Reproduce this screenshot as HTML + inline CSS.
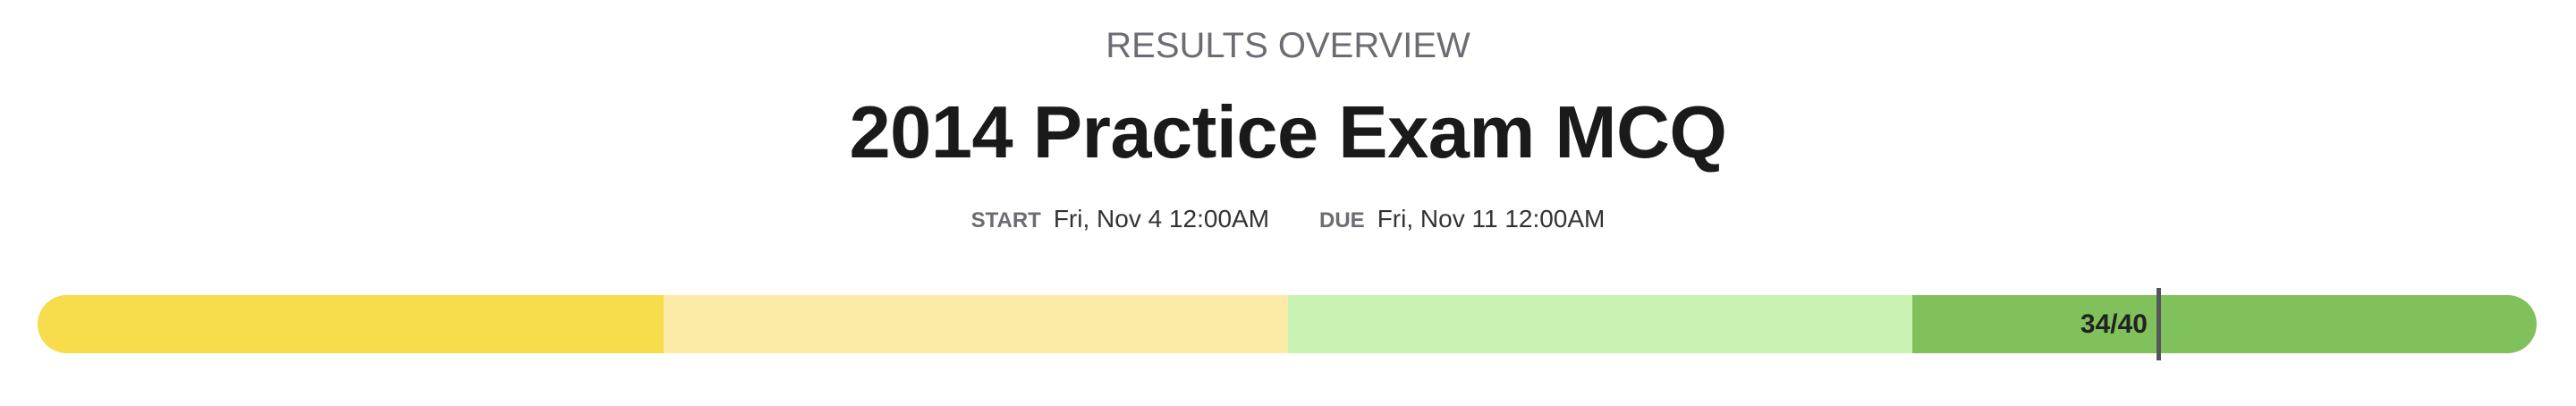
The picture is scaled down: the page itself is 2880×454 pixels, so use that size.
<!DOCTYPE html>
<html><head><meta charset="utf-8"><style>
html,body{margin:0;padding:0;width:2880px;height:454px;background:#fff;overflow:hidden;font-family:"Liberation Sans",Arial,sans-serif;position:relative}
.c{position:absolute;left:0;width:2880px;text-align:center;white-space:nowrap}
#sub{top:27px;font-size:40px;line-height:48px;color:#6c6c74}
#title{top:98px;font-size:83px;line-height:100px;font-weight:bold;color:#1a1a1a;letter-spacing:-0.5px}
#dates{top:228px;font-size:28px;line-height:34px;color:#333}
#dates b{font-size:24px;color:#6c6c74;margin-right:14px}
.seg{position:absolute;top:330px;height:65px}
</style></head><body>
<div class="c" id="sub">RESULTS OVERVIEW</div>
<div class="c" id="title">2014 Practice Exam MCQ</div>
<div class="c" id="dates"><b>START</b>Fri, Nov 4 12:00AM<span style="display:inline-block;width:56px"></span><b>DUE</b>Fri, Nov 11 12:00AM</div>
<div class="seg" style="left:42px;width:700px;background:#f7dc4b;border-radius:33px 0 0 33px"></div>
<div class="seg" style="left:742px;width:698px;background:#fbeba7"></div>
<div class="seg" style="left:1440px;width:698px;background:#caf3b3"></div>
<div class="seg" style="left:2138px;width:698px;background:#80c15c;border-radius:0 33px 33px 0"></div>
<div style="position:absolute;left:2300px;width:101px;top:343px;font-size:30px;line-height:40px;font-weight:bold;color:#222;text-align:right">34/40</div>
<div style="position:absolute;left:2411px;top:322px;width:5px;height:81px;background:#55565b"></div>
</body></html>
